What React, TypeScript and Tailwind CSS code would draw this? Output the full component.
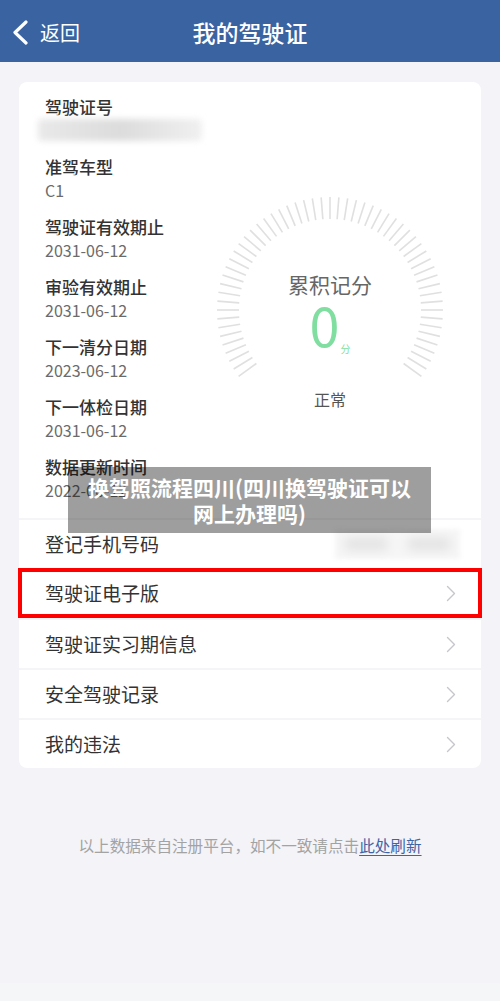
import React from "react";

const FONT = { fontFamily: '"Noto Sans CJK SC", "Noto Sans", sans-serif' };

function Gauge() {
  const ticks: React.ReactNode[] = [];
  const cx = 120, cy = 120, R = 113, r = 91;
  for (let i = 0; i < 57; i++) {
    const a = ((144 + i * 4.5) * Math.PI) / 180;
    ticks.push(
      <line
        key={i}
        x1={cx + r * Math.cos(a)}
        y1={cy + r * Math.sin(a)}
        x2={cx + R * Math.cos(a)}
        y2={cy + R * Math.sin(a)}
        stroke="#e0e0e0"
        strokeWidth={1.6}
      />
    );
  }
  return (
    <div className="relative w-[240px] h-[240px]">
      <svg className="absolute inset-0" width="240" height="240" viewBox="0 0 240 240">
        {ticks}
      </svg>
      <div className="absolute inset-0 flex flex-col items-center">
        <div className="mt-[82px] text-[21px] leading-[24px] text-[#666666]">累积记分</div>
        <div className="mt-[3px] flex items-end">
          <span className="text-[54px] leading-[50px] font-normal text-[#80dfa0]">0</span>
          <span className="ml-[1px] mb-[-6px] text-[10px] leading-[12px] text-[#80dfa0]">分</span>
        </div>
        <div className="mt-[40px] text-[16px] leading-[20px] text-[#555555]">正常</div>
      </div>
    </div>
  );
}

function Info({ label, value }: { label: string; value: React.ReactNode }) {
  return (
    <div className="flex flex-col">
      <div className="text-[17px] leading-[22px] font-medium text-[#333333]">{label}</div>
      <div className="mt-[1px] text-[16px] leading-[22px] text-[#6b6b6b]">{value}</div>
    </div>
  );
}

function Chevron() {
  return (
    <svg width="10" height="17" viewBox="0 0 10 17" fill="none">
      <path d="M1.5 1.5 L8.5 8.5 L1.5 15.5" stroke="#c6c6cb" strokeWidth="1.4" strokeLinecap="round" strokeLinejoin="round" />
    </svg>
  );
}

function Row({ label }: { label: string }) {
  return (
    <div className="h-[50px] flex items-center justify-between pl-[26px] pr-[25px] border-t-2 border-[#f5f5f7]">
      <span className="text-[19px] text-[#333333]">{label}</span>
      <Chevron />
    </div>
  );
}

export default function App() {
  return (
    <div className="relative w-[500px] h-[1001px] bg-[#f3f3f8] flex flex-col" style={FONT}>
      {/* header */}
      <div className="h-[62px] bg-[#3a63a2] flex items-center relative">
        <div className="flex items-center pl-[12px] pt-[3px]">
          <svg width="17" height="25" viewBox="0 0 17 25" fill="none">
            <path d="M14 2 L3 12.5 L14 23" stroke="#ffffff" strokeWidth="3.2" strokeLinecap="round" strokeLinejoin="round" />
          </svg>
          <span className="ml-[11px] text-[20px] text-white">返回</span>
        </div>
        <div className="absolute inset-0 flex items-center justify-center pt-[3px] pointer-events-none">
          <span className="text-[23px] font-medium text-white">我的驾驶证</span>
        </div>
      </div>

      {/* card */}
      <div className="mt-[20px] mx-[19px] bg-white rounded-[8px] flex flex-col">
        <div className="flex h-[436px]">
          <div className="w-[191px] pl-[26px] pt-[14px] flex flex-col gap-[15px]">
            <Info
              label="驾驶证号"
              value={
                <div className="h-[22px] w-[164px] -ml-[7px] bg-gradient-to-r from-[#e9e9e9] via-[#dcdcdc] to-[#f0f0f0] blur-[3px] rounded" />
              }
            />
            <Info label="准驾车型" value="C1" />
            <Info label="驾驶证有效期止" value="2031-06-12" />
            <Info label="审验有效期止" value="2031-06-12" />
            <Info label="下一清分日期" value="2023-06-12" />
            <Info label="下一体检日期" value="2031-06-12" />
            <Info label="数据更新时间" value="2022-06-12" />
          </div>
          <div className="pt-[108px]">
            <Gauge />
          </div>
        </div>
        <div className="h-[50px] flex items-center justify-between pl-[26px] pr-[21px] border-t-2 border-[#f5f5f7]">
          <span className="text-[19px] text-[#333333]">登记手机号码</span>
          <div className="w-[125px] h-[30px] flex items-center justify-around bg-[#f6f6f6] blur-[2px]">
            <div className="w-[44px] h-[12px] rounded-full bg-[#e2e2e2] blur-[5px]" />
            <div className="w-[44px] h-[12px] rounded-full bg-[#e2e2e2] blur-[5px]" />
          </div>
        </div>
        <div className="-mx-[1px] border-[4px] border-[#ff0000] h-[50px] flex items-center justify-between pl-[23px] pr-[22px]">
          <span className="text-[19px] text-[#333333]">驾驶证电子版</span>
          <Chevron />
        </div>
        <Row label="驾驶证实习期信息" />
        <Row label="安全驾驶记录" />
        <Row label="我的违法" />
      </div>

      {/* footer note */}
      <div className="mt-[66px] text-center text-[15.6px] leading-[22px] text-[#a3a3a3]">
        以上数据来自注册平台，如不一致请点击
        <span className="text-[#3d64a6] underline underline-offset-[3px]">此处刷新</span>
      </div>

      <div className="mt-auto h-[18px] bg-[#f4f6f7]" />

      {/* watermark overlay */}
      <div className="absolute left-[68px] top-[467px] w-[363px] h-[66px] bg-[rgba(0,0,0,0.38)] flex flex-col items-center justify-center">
        <div className="text-[21px] leading-[26px] font-bold text-white">换驾照流程四川(四川换驾驶证可以</div>
        <div className="text-[21px] leading-[26px] font-bold text-white">网上办理吗)</div>
      </div>
    </div>
  );
}
